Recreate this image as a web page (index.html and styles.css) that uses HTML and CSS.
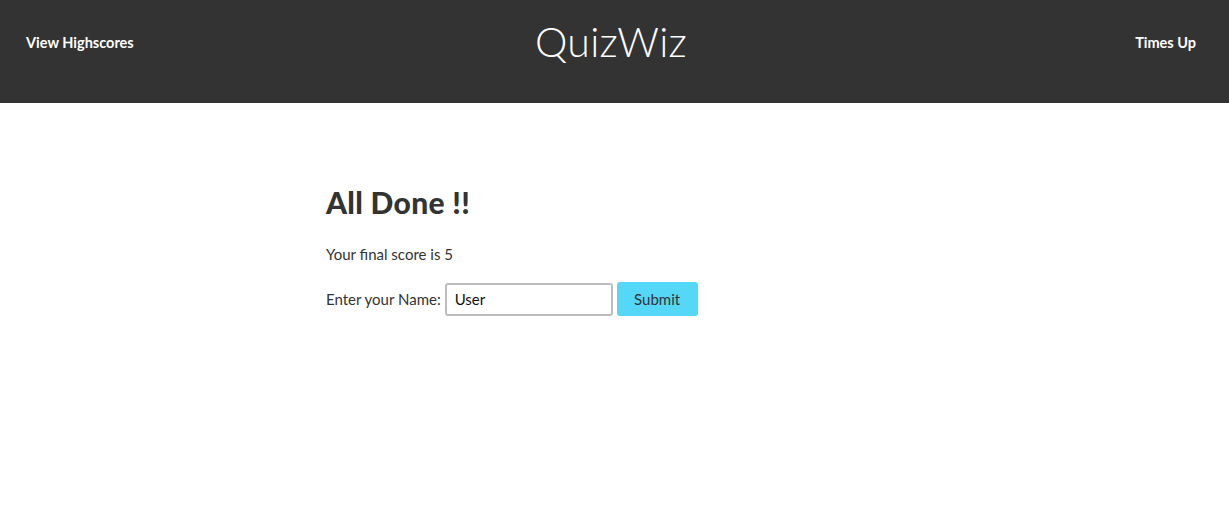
FILE: index.html
```html
<!DOCTYPE html>
<html>
<head>
<meta charset="utf-8">
<link rel="stylesheet" href="styles.css">
</head>
<body>
<header class="topbar">
  <a class="nav-link">View Highscores</a>
  <h1 class="brand">QuizWiz</h1>
  <span class="timer">Times Up</span>
</header>
<main class="content">
  <h2 class="title">All Done !!</h2>
  <p class="score">Your final score is 5</p>
  <form class="name-form">
    <label class="label" for="name">Enter your Name:</label>
    <input class="name-input" id="name" type="text" value="User">
    <button class="submit" type="button">Submit</button>
  </form>
</main>
</body>
</html>
```
FILE: styles.css
```css
html, body {
  margin: 0;
  padding: 0;
  background: #fff;
  font-family: Lato, "Open Sans", sans-serif;
  color: #333;
}
.topbar {
  height: 103px;
  background: #333;
  display: flex;
  align-items: center;
  justify-content: space-between;
  padding: 0 33px 0 26px;
  box-sizing: border-box;
  color: #fff;
}
.nav-link {
  font-size: 14.5px;
  font-weight: 700;
  width: 200px;
  margin-top: -18px;
}
.brand {
  margin: 0;
  font-size: 41px;
  font-weight: 300;
  letter-spacing: 0.3px;
  margin-top: -20px;
}
.timer {
  font-size: 14.5px;
  font-weight: 700;
  width: 200px;
  text-align: right;
  margin-top: -18px;
}
.content {
  width: 577px;
  margin: 0 auto;
  padding-top: 80px;
}
.title {
  margin: 0;
  font-size: 30px;
  font-weight: 900;
  line-height: 38px;
  letter-spacing: 0.3px;
}
.score {
  margin: 23px 0 0;
  font-size: 15px;
  line-height: 20px;
}
.name-form {
  margin-top: 18px;
  display: flex;
  align-items: center;
}
.label {
  font-size: 15px;
  margin-right: 4px;
}
.name-input {
  width: 168px;
  height: 33px;
  box-sizing: border-box;
  border: 2px solid #bdbdbd;
  border-radius: 3px;
  padding: 0 8px;
  font-family: Lato, "Open Sans", sans-serif;
  font-size: 15px;
  color: #111;
}
.submit {
  margin-left: 4px;
  width: 81px;
  height: 34px;
  border: none;
  border-radius: 3px;
  background: #55d7f8;
  color: #333;
  font-family: Lato, "Open Sans", sans-serif;
  font-size: 15px;
}
```
